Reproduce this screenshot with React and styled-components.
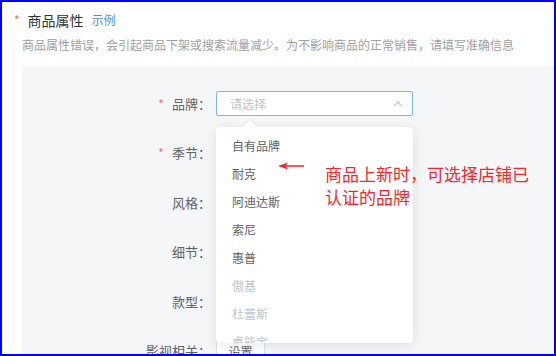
import React from "react";
import styled, { createGlobalStyle } from "styled-components";

const GlobalStyle = createGlobalStyle`
  * { box-sizing: border-box; }
  body {
    margin: 0;
    background: #ffffff;
    font-family: "Noto Sans CJK SC", "Noto Sans", sans-serif;
  }
`;

const brands = [
  { name: "自有品牌" },
  { name: "耐克" },
  { name: "阿迪达斯" },
  { name: "索尼" },
  { name: "惠普" },
  { name: "傲基", disabled: true },
  { name: "杜蕾斯", disabled: true },
  { name: "桌能宝", disabled: true },
];

const fields = [
  { label: "品牌", required: true, select: true },
  { label: "季节", required: true },
  { label: "风格" },
  { label: "细节" },
  { label: "款型" },
  { label: "影视相关", button: "设置" },
];

function App() {
  return (
    <>
      <GlobalStyle />
      <Frame>
        <Header>
          <Title>
            <Star>*</Star>
            商品属性
            <Example>示例</Example>
          </Title>
          <Desc>
            商品属性错误，会引起商品下架或搜索流量减少。为不影响商品的正常销售，请填写准确信息
          </Desc>
        </Header>
        <Panel>
          {fields.map((f) => (
            <Row key={f.label}>
              <Label>
                {f.required && <Star>*</Star>}
                {f.label}：
              </Label>
              <Control>
                {f.select && (
                  <>
                    <Select>
                      <Placeholder>请选择</Placeholder>
                      <svg width="10" height="6" viewBox="0 0 10 6">
                        <path d="M1 5.2 L5 1.2 L9 5.2" fill="none" stroke="#c0c4cc" strokeWidth="1.2" />
                      </svg>
                    </Select>
                    <Dropdown>
                      <PopArrow />
                      <List>
                        {brands.map((b) => (
                          <Item key={b.name} $disabled={b.disabled}>
                            {b.name}
                          </Item>
                        ))}
                      </List>
                    </Dropdown>
                  </>
                )}
                {f.button && <SetButton>{f.button}</SetButton>}
              </Control>
            </Row>
          ))}
          <Note>
            <svg width="26" height="8" viewBox="0 0 26 8">
              <polygon points="0,4 10,0.4 8,3.2 26,3.3 26,4.7 8,4.8 10,7.6" fill="#f5272b" />
            </svg>
            <NoteText>商品上新时，可选择店铺已认证的品牌</NoteText>
          </Note>
        </Panel>
      </Frame>
    </>
  );
}

export default App;

const Frame = styled.div`
  width: 556px;
  height: 356px;
  border: 2px solid #0000ff;
  overflow: hidden;
  display: flex;
  flex-direction: column;
  background: #fff;
`;

const Header = styled.div`
  padding: 8px 0 0 12px;
`;

const Title = styled.div`
  font-size: 14px;
  line-height: 20px;
  color: #333;
  display: flex;
  align-items: center;
`;

const Star = styled.span`
  color: #f56c6c;
  font-size: 12px;
  margin-right: 8px;
`;

const Example = styled.span`
  color: #4d8cf5;
  font-size: 12px;
  margin-left: 8px;
`;

const Desc = styled.div`
  margin: 6px 0 0 8px;
  font-size: 12px;
  line-height: 18px;
  color: #a0a0a0;
  white-space: nowrap;
`;

const Panel = styled.div`
  position: relative;
  flex: 1;
  margin: 12px 0 0 20px;
  padding-top: 25px;
  background: #f5f6f8;
  display: flex;
  flex-direction: column;
  gap: 24.4px;
`;

const Row = styled.div`
  display: grid;
  grid-template-columns: 189px 197px;
  column-gap: 5px;
  align-items: center;
  height: 25px;
`;

const Label = styled.div`
  text-align: right;
  font-size: 13px;
  color: #606266;
  white-space: nowrap;
`;

const Control = styled.div`
  position: relative;
  height: 25px;
`;

const Select = styled.div`
  height: 25px;
  border: 1px solid #7eb3f7;
  border-radius: 2px;
  background: #fff;
  display: flex;
  align-items: center;
  justify-content: space-between;
  padding: 0 9px 0 13px;
`;

const Placeholder = styled.span`
  font-size: 12px;
  color: #c0c4cc;
`;

const Dropdown = styled.div`
  position: absolute;
  top: 36px;
  left: 0;
  width: 197px;
  background: #fff;
  border-radius: 4px;
  box-shadow: 0 2px 12px rgba(0, 0, 0, 0.1);
  z-index: 2;
`;

const PopArrow = styled.div`
  position: absolute;
  top: -5px;
  left: 29px;
  width: 10px;
  height: 10px;
  background: #fff;
  transform: rotate(45deg);
  box-shadow: -1px -1px 2px rgba(0, 0, 0, 0.04);
`;

const List = styled.ul`
  position: relative;
  list-style: none;
  margin: 0;
  padding: 5px 0 0;
  height: 216px;
  overflow: hidden;
`;

const Item = styled.li`
  height: 28px;
  line-height: 28px;
  padding-left: 16px;
  font-size: 12px;
  color: ${(p) => (p.$disabled ? "#c0c4cc" : "#606266")};
`;

const SetButton = styled.button`
  height: 24px;
  width: 49px;
  border: 1px solid #dcdfe6;
  border-radius: 2px;
  background: #fff;
  font-family: inherit;
  font-size: 12px;
  color: #606266;
  padding: 0;
`;

const Note = styled.div`
  position: absolute;
  left: 256px;
  top: 96px;
  display: flex;
  align-items: flex-start;
  gap: 21px;
  z-index: 3;
`;

const NoteText = styled.div`
  width: 212px;
  font-size: 17px;
  line-height: 23px;
  color: #f5272b;
`;
